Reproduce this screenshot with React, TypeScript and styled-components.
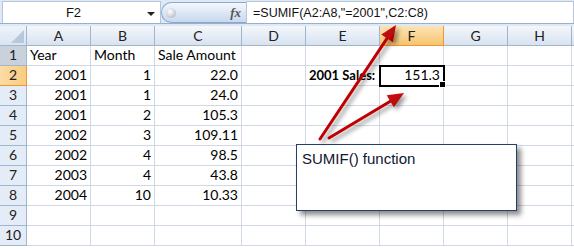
import { styled, createGlobalStyle } from "styled-components";

const Global = createGlobalStyle`
  html, body {
    margin: 0;
    padding: 0;
    background: #fff;
  }
  body {
    width: 574px;
    height: 250px;
    overflow: hidden;
  }
`;

const COLS = [27, 64, 64, 87, 64, 74, 64, 64, 64, 40];
const LETTERS = ["A", "B", "C", "D", "E", "F", "G", "H", ""];

type Cell = { v: string; align?: "left" | "right"; bold?: boolean };

const sheet: Cell[][] = [
  [{ v: "Year" }, { v: "Month" }, { v: "Sale Amount" }],
  [
    { v: "2001", align: "right" },
    { v: "1", align: "right" },
    { v: "22.0", align: "right" },
    { v: "" },
    { v: "2001 Sales:", bold: true },
    { v: "151.3", align: "right" },
  ],
  [{ v: "2001", align: "right" }, { v: "1", align: "right" }, { v: "24.0", align: "right" }],
  [{ v: "2001", align: "right" }, { v: "2", align: "right" }, { v: "105.3", align: "right" }],
  [{ v: "2002", align: "right" }, { v: "3", align: "right" }, { v: "109.11", align: "right" }],
  [{ v: "2002", align: "right" }, { v: "4", align: "right" }, { v: "98.5", align: "right" }],
  [{ v: "2003", align: "right" }, { v: "4", align: "right" }, { v: "43.8", align: "right" }],
  [{ v: "2004", align: "right" }, { v: "10", align: "right" }, { v: "10.33", align: "right" }],
  [],
  [],
];

const Window = styled.div`
  position: relative;
  width: 574px;
  height: 250px;
  overflow: hidden;
  background: #fff;
  font-family: "Lato", "Liberation Sans", sans-serif;
`;

const FormulaBar = styled.div`
  display: flex;
  height: 24px;
  background: #dfe8f5;
  border-bottom: 1px solid #9aafcb;
  box-sizing: border-box;
`;

const NameBox = styled.div`
  position: relative;
  width: 159px;
  margin: 1px 0 0 2px;
  background: #fff;
  border: 1px solid #b6c6db;
  border-bottom: none;
  box-sizing: border-box;
  display: flex;
  align-items: center;
  justify-content: center;
  padding-right: 16px;
  font-family: "Liberation Sans", Arial, sans-serif;
  font-size: 13px;
  color: #111;
`;

const DropArrow = styled.span`
  position: absolute;
  right: 5px;
  top: 10px;
  width: 0;
  height: 0;
  border-left: 4px solid transparent;
  border-right: 4px solid transparent;
  border-top: 4px solid #222;
`;

const FxPill = styled.div`
  position: relative;
  width: 85px;
  margin-top: 2px;
  height: 21px;
  border: 1px solid #8ea8cc;
  border-right: none;
  border-radius: 11px 0 0 11px;
  background: linear-gradient(#f4f8fc, #dbe6f4 55%, #c8d8ee);
  box-sizing: border-box;
  display: flex;
  align-items: center;
  justify-content: space-between;
  padding: 0 5px 0 4px;
`;

const Knob = styled.span`
  width: 10px;
  height: 10px;
  border-radius: 50%;
  background: radial-gradient(circle at 40% 35%, #ffffff, #c9ced6 60%, #9aa3ae);
`;

const FxLabel = styled.span`
  font-family: "Liberation Serif", "Times New Roman", serif;
  font-style: italic;
  font-weight: bold;
  font-size: 13px;
  color: #555;
`;

const FormulaInput = styled.div`
  flex: 1;
  margin-top: 1px;
  background: #fff;
  border: 1px solid #b6c6db;
  border-bottom: none;
  box-sizing: border-box;
  display: flex;
  align-items: center;
  padding-left: 6px;
  font-family: "Liberation Sans", Arial, sans-serif;
  font-size: 12.5px;
  color: #111;
`;

const Strip = styled.div`
  height: 2px;
  background: #dfe8f5;
`;

const Grid = styled.div`
  display: grid;
  grid-template-columns: ${COLS.map((c) => c + "px").join(" ")};
  grid-auto-rows: 20px;
`;

const Corner = styled.div`
  position: relative;
  background: linear-gradient(#eef3fa, #dae4f1);
  border-right: 1px solid #9eb6ce;
  border-bottom: 1px solid #9eb6ce;
  box-sizing: border-box;
  &::after {
    content: "";
    position: absolute;
    right: 2px;
    bottom: 2px;
    width: 0;
    height: 0;
    border-left: 13px solid transparent;
    border-bottom: 13px solid #b7c7dc;
  }
`;

const ColHead = styled.div<{ $active?: boolean }>`
  display: flex;
  align-items: center;
  justify-content: center;
  box-sizing: border-box;
  background: ${(p) =>
    p.$active
      ? "linear-gradient(#fbe3b4, #f9d595 50%, #f6c46b)"
      : "linear-gradient(#f4f7fb, #e6edf6 50%, #d8e2ee)"};
  border-right: 1px solid ${(p) => (p.$active ? "#f29536" : "#9eb6ce")};
  border-bottom: 1px solid ${(p) => (p.$active ? "#f29536" : "#9eb6ce")};
  font-size: 14px;
  color: #222;
`;

const RowHead = styled.div<{ $active?: boolean; $first?: boolean }>`
  display: flex;
  align-items: flex-end;
  justify-content: center;
  padding-bottom: 2px;
  box-sizing: border-box;
  background: ${(p) =>
    p.$active
      ? "linear-gradient(90deg, #fbdca4, #f8cd80)"
      : p.$first
      ? "#c9d1dc"
      : "#e4ecf7"};
  border-right: 1px solid ${(p) => (p.$active ? "#f29536" : "#9eb6ce")};
  border-bottom: 1px solid ${(p) => (p.$active ? "#f29536" : "#9eb6ce")};
  font-size: 14px;
  color: #222;
`;

const CellBox = styled.div<{ $align?: string; $bold?: boolean; $sel?: boolean }>`
  position: relative;
  display: flex;
  align-items: flex-end;
  justify-content: ${(p) => (p.$align === "right" ? "flex-end" : "flex-start")};
  padding: 0 3px 2px 3px;
  box-sizing: border-box;
  border-right: 1px solid #d0d7e5;
  border-bottom: 1px solid #d0d7e5;
  font-size: ${(p) => (p.$bold ? "13px" : "14px")};
  font-weight: ${(p) => (p.$bold ? 700 : 400)};
  color: #000;
  white-space: nowrap;
  ${(p) =>
    p.$sel &&
    `
    outline: 2px solid #000;
    outline-offset: -1px;
    z-index: 1;
    &::after {
      content: "";
      position: absolute;
      right: -3px;
      bottom: -3px;
      width: 5px;
      height: 5px;
      background: #000;
      border: 1px solid #fff;
    }
  `}
`;

const Callout = styled.div`
  position: absolute;
  left: 296px;
  top: 144px;
  width: 221px;
  height: 67px;
  box-sizing: border-box;
  background: #fff;
  border: 1.5px solid #243f6b;
  box-shadow: 4px 4px 5px rgba(0, 0, 0, 0.45);
  padding: 5px 0 0 5px;
  font-family: "Liberation Sans", Arial, sans-serif;
  font-size: 15px;
  color: #10162e;
  z-index: 3;
`;

const Overlay = styled.svg`
  position: absolute;
  left: 0;
  top: 0;
  pointer-events: none;
  z-index: 4;
`;

type Arrow = { x1: number; y1: number; x2: number; y2: number };

const arrows: Arrow[] = [
  { x1: 320, y1: 139, x2: 396, y2: 25 },
  { x1: 329, y1: 138, x2: 404, y2: 93 },
];

function arrowShape(a: Arrow) {
  const dx = a.x2 - a.x1;
  const dy = a.y2 - a.y1;
  const len = Math.hypot(dx, dy);
  const ux = dx / len;
  const uy = dy / len;
  const hl = 16;
  const hw = 7;
  const bx = a.x2 - ux * hl;
  const by = a.y2 - uy * hl;
  const px = -uy * hw;
  const py = ux * hw;
  return {
    line: { x1: a.x1, y1: a.y1, x2: bx + ux * 2, y2: by + uy * 2 },
    head: `${a.x2},${a.y2} ${bx + px},${by + py} ${bx - px},${by - py}`,
  };
}

export default function App() {
  return (
    <Window>
      <Global />
      <FormulaBar>
        <NameBox>
          F2
          <DropArrow />
        </NameBox>
        <FxPill>
          <Knob />
          <FxLabel>fx</FxLabel>
        </FxPill>
        <FormulaInput>=SUMIF(A2:A8,"=2001",C2:C8)</FormulaInput>
      </FormulaBar>
      <Strip />
      <Grid>
        <Corner />
        {LETTERS.map((l, i) => (
          <ColHead key={i} $active={l === "F"}>
            {l}
          </ColHead>
        ))}
        {sheet.map((row, r) => (
          <>
            <RowHead key={"h" + r} $active={r === 1} $first={r === 0}>
              {r + 1}
            </RowHead>
            {LETTERS.map((_, c) => {
              const cell = row[c];
              return (
                <CellBox
                  key={r + "-" + c}
                  $align={cell?.align}
                  $bold={cell?.bold}
                  $sel={r === 1 && c === 5}
                >
                  {cell?.v}
                </CellBox>
              );
            })}
          </>
        ))}
      </Grid>

      <Callout>SUMIF() function</Callout>

      <Overlay width="574" height="250" viewBox="0 0 574 250">
        <defs>
          <filter id="sh" x="-20%" y="-20%" width="140%" height="140%">
            <feDropShadow dx="3" dy="3" stdDeviation="2" floodColor="#000" floodOpacity="0.4" />
          </filter>
          <linearGradient id="red" x1="0" y1="0" x2="1" y2="1">
            <stop offset="0" stopColor="#d21414" />
            <stop offset="1" stopColor="#a80000" />
          </linearGradient>
        </defs>
        {arrows.map((a, i) => {
          const s = arrowShape(a);
          return (
            <g key={i} filter="url(#sh)">
              <line {...s.line} stroke="#c00000" strokeWidth="3" strokeLinecap="round" />
              <polygon points={s.head} fill="url(#red)" />
            </g>
          );
        })}
      </Overlay>
    </Window>
  );
}
